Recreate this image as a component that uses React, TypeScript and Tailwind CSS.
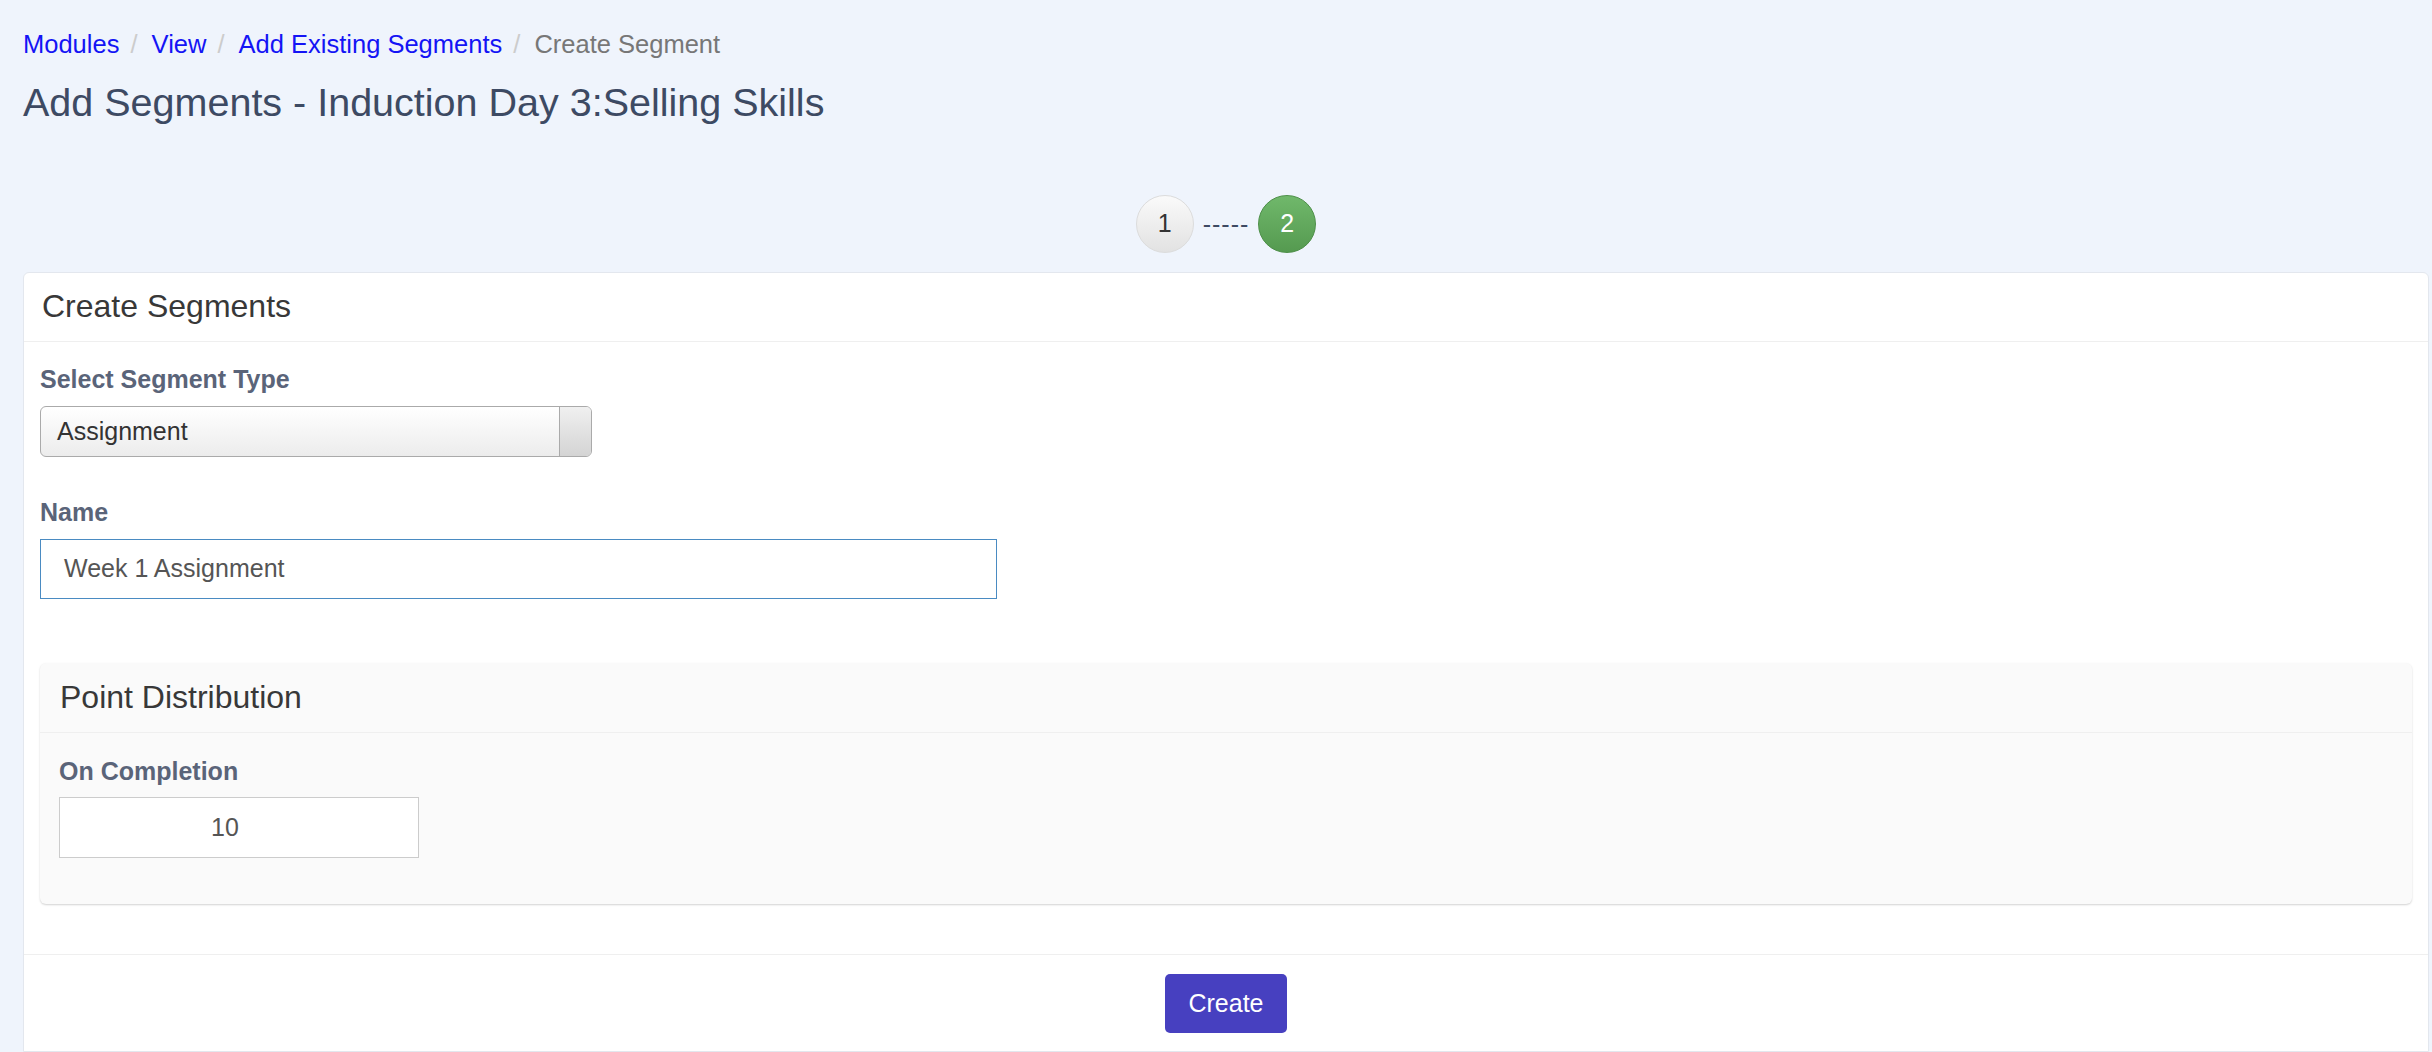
import React from 'react'

const crumbs = [
  { name: 'Modules', href: '#' },
  { name: 'View', href: '#' },
  { name: 'Add Existing Segments', href: '#' },
]

export default function App() {
  return (
    <div className="min-h-screen bg-[#eff4fc] pl-[23px] pr-[3px] font-['Liberation_Sans',Arial,sans-serif]">
      {/* Breadcrumb */}
      <div className="flex items-center pt-[26px] text-[25.5px] leading-[36px]">
        {crumbs.map((c) => (
          <React.Fragment key={c.name}>
            <a href={c.href} className="text-[#1414f5]">
              {c.name}
            </a>
            <span className="pl-[11px] pr-[7px] text-[#cccccc]">/{'\u00a0'}</span>
          </React.Fragment>
        ))}
        <span className="text-[#777777]">Create Segment</span>
      </div>

      {/* Title */}
      <h1 className="mt-[18px] text-[39.5px] leading-[44px] text-[#3d4a63]">
        Add Segments - Induction Day 3:Selling Skills
      </h1>

      {/* Stepper */}
      <div className="mt-[71px] flex items-center justify-center gap-[9px]">
        <div className="flex h-[58px] w-[58px] items-center justify-center rounded-full border border-[#dcdcdc] bg-gradient-to-b from-[#fafafa] to-[#e2e2e2] text-[25px] text-[#333333]">
          1
        </div>
        <span className="text-[25px] leading-none tracking-[1px] text-[#3d4a63]">-----</span>
        <div className="flex h-[58px] w-[58px] items-center justify-center rounded-full border border-[#4d8f48] bg-gradient-to-b from-[#70b86b] to-[#559a50] text-[25px] text-white">
          2
        </div>
      </div>

      {/* Card */}
      <div className="mt-[19px] rounded-t-[6px] border border-[#e3e7ee] bg-white">
        <div className="border-b border-[#efefef] px-[18px] pb-[17px] pt-[16px] text-[32px] leading-[35px] text-[#383838]">
          Create Segments
        </div>

        <div className="px-[16px] pb-[50px] pt-[19px]">
          <label className="block text-[25px] font-bold leading-[36px] text-[#5a6479]">
            Select Segment Type
          </label>
          <div className="mt-[9px] flex h-[51px] w-[552px] overflow-hidden rounded-[6px] border border-[#aaaaaa] bg-gradient-to-b from-white to-[#ececec]">
            <div className="flex flex-1 items-center pl-[16px] text-[25px] text-[#333333]">Assignment</div>
            <div className="w-[32px] border-l border-[#aaaaaa] bg-gradient-to-b from-[#f0f0f0] to-[#d4d4d4]" />
          </div>

          <label className="mt-[37px] block text-[25px] font-bold leading-[36px] text-[#5a6479]">Name</label>
          <div className="mt-[9px] flex h-[60px] w-[957px] items-center border border-[#4a8bc2] bg-white pl-[23px] text-[25px] text-[#555555]">
            Week 1 Assignment
          </div>

          {/* Point Distribution */}
          <div className="mt-[64px] rounded-[6px] bg-[#fafafa] shadow-[0_1px_2px_rgba(0,0,0,0.18)]">
            <div className="border-b border-[#efefef] px-[20px] py-[17px] text-[32px] leading-[35px] text-[#383838]">
              Point Distribution
            </div>
            <div className="px-[19px] pb-[46px] pt-[20px]">
              <label className="block text-[25px] font-bold leading-[36px] text-[#5a6479]">On Completion</label>
              <div className="mt-[8px] flex h-[61px] w-[360px] items-center justify-center border border-[#cccccc] bg-white pr-[28px] text-[25px] text-[#555555]">
                10
              </div>
            </div>
          </div>
        </div>

        <div className="flex justify-center border-t border-[#efefef] pb-[18px] pt-[19px]">
          <button className="h-[59px] w-[122px] rounded-[5px] bg-[#4740c0] text-[25px] text-white">Create</button>
        </div>
      </div>
    </div>
  )
}
